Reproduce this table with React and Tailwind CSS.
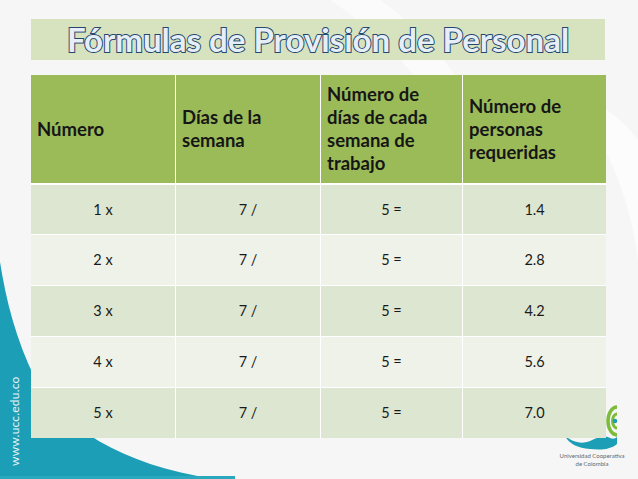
import React from 'react';

const headers = [
  'Número',
  'Días de la semana',
  'Número de días de cada semana de trabajo',
  'Número de personas requeridas',
];

const rows = [
  ['1 x', '7 /', '5 =', '1.4'],
  ['2 x', '7 /', '5 =', '2.8'],
  ['3 x', '7 /', '5 =', '4.2'],
  ['4 x', '7 /', '5 =', '5.6'],
  ['5 x', '7 /', '5 =', '7.0'],
];

const Backdrop = () => (
  <svg className="absolute inset-0" width="638" height="479" viewBox="0 0 638 479">
    <path d="M330 0 C 420 60 470 140 470 240 L 510 240 C 505 130 450 50 380 0 Z" fill="#fbfbfb" />
    <path d="M560 90 C 610 140 630 200 638 260 L 638 140 C 620 115 595 100 560 90 Z" fill="#fcfcfc" />
    <path d="M0 262 C 6 300 16 340 35 378 C 60 425 120 465 215 479 L 0 479 Z" fill="#1c9fb6" />
    <rect x="0" y="476" width="235" height="3" fill="#2aa8bd" />
  </svg>
);

const Logo = () => (
  <>
    <svg className="absolute left-[560px] top-[404px]" width="60" height="46" viewBox="0 0 60 46">
      <path d="M57 3 A 9 14 0 0 0 57 31" fill="none" stroke="#7dbb3a" strokeWidth="3.5" />
      <path d="M57 10 A 4.5 7 0 0 0 57 24" fill="none" stroke="#7dbb3a" strokeWidth="3" />
      <circle cx="55" cy="17" r="2.3" fill="#1c9fb6" />
      <path
        d="M5 32 C 12 37 20 41 30 37 C 38 33 44 31 50 34 C 53 35 55 35 57 33 L 57 40 C 50 46 40 46 30 45 C 18 44 9 40 5 32 Z"
        fill="#1c9fb6"
      />
    </svg>
    <div className="absolute left-[552px] top-[452px] w-[80px] text-center font-['Lato',sans-serif] text-[6px] leading-[8px] text-[#666]">
      Universidad Cooperativa
      <br />
      de Colombia
    </div>
  </>
);

export default function App() {
  return (
    <div className="relative h-[479px] w-[638px] overflow-hidden bg-[#f6f6f6] font-['Lato',sans-serif]">
      <Backdrop />
      <div className="absolute left-[6px] top-[466px] origin-top-left -rotate-90 text-[12px] tracking-[0.2px] text-white/90">
        www.ucc.edu.co
      </div>
      <Logo />

      <div className="relative flex flex-col pl-[31px] pt-[19px]">
        <div className="flex h-[41px] w-[574px] items-center justify-center bg-[#d7e3bf]">
          <h1 className="text-[33px] font-bold leading-none text-[#e6eef8] [-webkit-text-stroke:2px_#24476f] [paint-order:stroke_fill]">
            Fórmulas de Provisión de Personal
          </h1>
        </div>

        <div className="mt-[15px] grid w-[575px] grid-cols-[144px_145px_142px_144px]">
          {headers.map((h, i) => (
            <div
              key={h}
              className={`flex h-[108px] items-center bg-[#9bbb59] px-[6px] text-[18.5px] font-bold leading-[23px] text-[#161616] ${
                i > 0 ? 'border-l border-white' : ''
              }`}
            >
              {h}
            </div>
          ))}
          {rows.map((row, r) =>
            row.map((cell, c) => (
              <div
                key={`${r}-${c}`}
                className={`flex h-[51px] items-center justify-center border-t text-[14.5px] text-[#1a1a1a] ${
                  r === 0 ? 'border-t-2' : ''
                } border-white ${c > 0 ? 'border-l' : ''} ${r % 2 === 0 ? 'bg-[#dde6d0]' : 'bg-[#eef2e9]'}`}
              >
                {cell}
              </div>
            ))
          )}
        </div>
      </div>
    </div>
  );
}
